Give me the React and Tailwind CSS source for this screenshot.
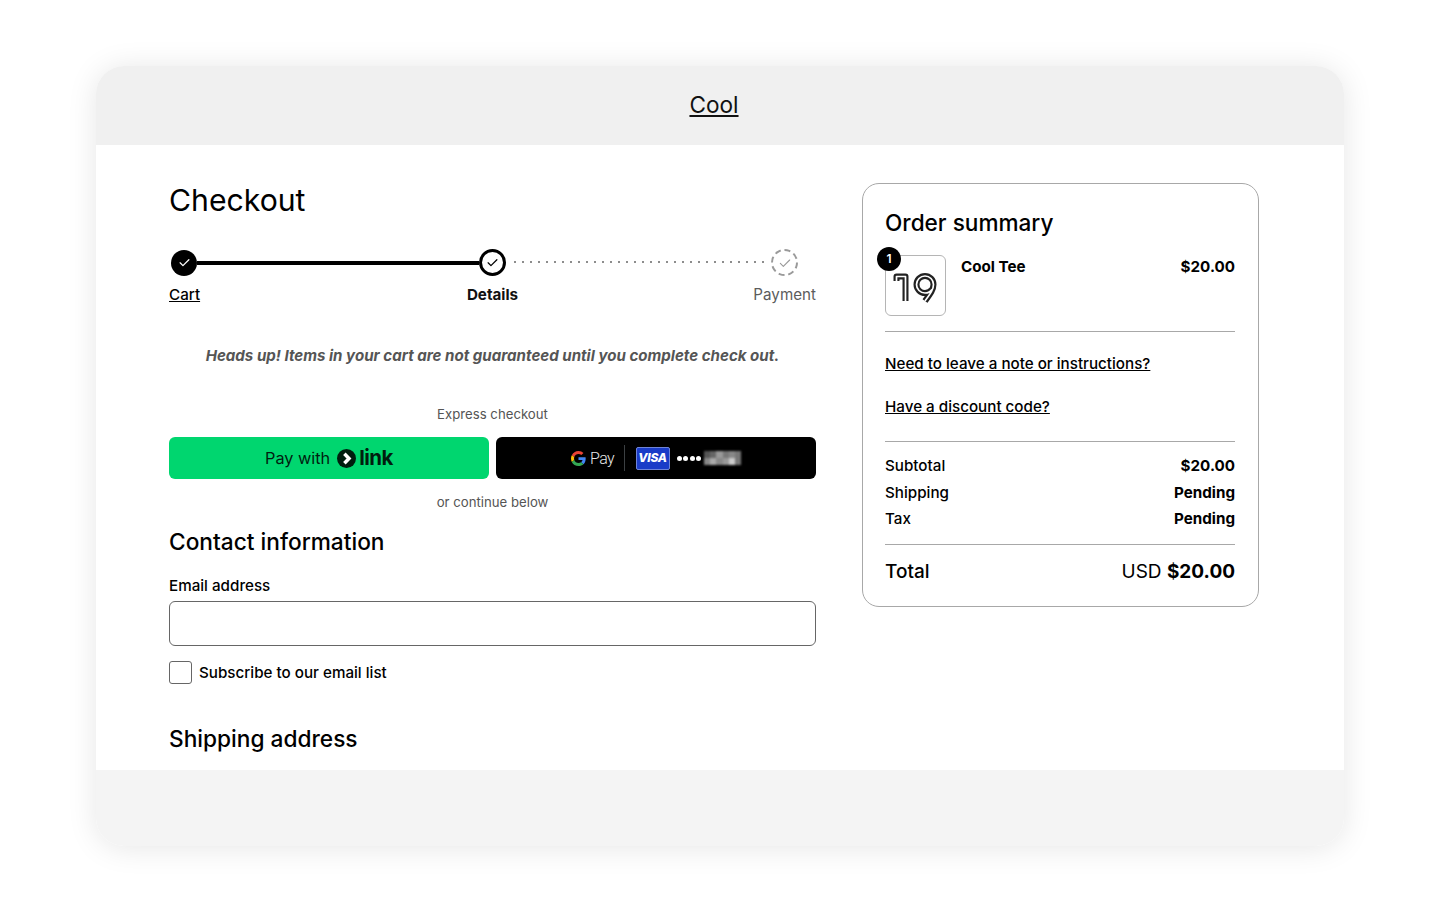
import React from 'react';

function Check({ className, thin }) {
  return (
    <svg viewBox="0 0 24 24" className={className} fill="none" stroke="currentColor" strokeWidth={thin ? 1.600 : 2} strokeLinecap="round" strokeLinejoin="round">
      <path d="M5 12.500l4.500 4.500L19 7.500" />
    </svg>
  );
}

function Stepper() {
  return (
    <div>
      <div className="flex items-center pl-[2px] pr-[18px]">
        <div className="w-[26px] h-[26px] rounded-full bg-black text-white flex items-center justify-center shrink-0">
          <Check className="w-[15px] h-[15px]" />
        </div>
        <div className="w-[282px] h-[4px] bg-black shrink-0" />
        <div className="w-[27px] h-[27px] rounded-full border-[3px] border-black text-black flex items-center justify-center shrink-0">
          <Check className="w-[15px] h-[15px]" />
        </div>
        <svg className="flex-1 h-[4px] -mt-[2px]" height="4">
          <line x1="8" y1="2" x2="261" y2="2" stroke="#8d8d8d" strokeWidth="2" strokeDasharray="2 6" />
        </svg>
        <div className="w-[27px] h-[27px] rounded-full border-2 border-dashed border-[#9a9a9a] text-[#999] flex items-center justify-center shrink-0">
          <Check className="w-[16px] h-[16px]" thin />
        </div>
      </div>
      <div className="grid grid-cols-3 mt-[9px] text-[15.200px] leading-[20px]">
        <a className="underline font-medium text-black justify-self-start">Cart</a>
        <span className="font-bold text-center text-[#111]">Details</span>
        <span className="text-right text-[#5c5c5c]">Payment</span>
      </div>
    </div>
  );
}

function GoogleG() {
  return (
    <svg viewBox="0 0 48 48" className="w-[15px] h-[15px]">
      <path fill="#EA4335" d="M24 9.500c3.500 0 6.600 1.200 9.100 3.600l6.800-6.800C35.800 2.500 30.400 0 24 0 14.600 0 6.500 5.400 2.600 13.200l7.900 6.100C12.400 13.600 17.700 9.500 24 9.500z" />
      <path fill="#4285F4" d="M46.900 24.500c0-1.600-.1-3.100-.4-4.500H24v9h12.900c-.6 3-2.200 5.500-4.700 7.200l7.700 6c4.500-4.200 7-10.300 7-17.700z" />
      <path fill="#FBBC05" d="M10.500 28.700c-.5-1.400-.8-3-.8-4.700s.3-3.200.8-4.700l-7.900-6.100C1 16.400 0 20.100 0 24s1 7.600 2.600 10.800l7.900-6.100z" />
      <path fill="#34A853" d="M24 48c6.500 0 11.900-2.100 15.900-5.800l-7.700-6c-2.100 1.400-4.900 2.300-8.200 2.300-6.300 0-11.600-4.100-13.500-9.800l-7.900 6.100C6.500 42.600 14.600 48 24 48z" />
    </svg>
  );
}

function ExpressButtons() {
  return (
    <div className="grid grid-cols-2 gap-[7px] mt-[13px]">
      <div className="h-[42px] rounded-[6px] bg-[#00d66f] flex items-center justify-center text-[#011e0f]">
        <span className="text-[16.300px]">Pay with</span>
        <span className="ml-[7px] w-[19px] h-[19px] rounded-full bg-[#011e0f] flex items-center justify-center">
          <svg viewBox="0 0 12 12" className="w-[15px] h-[15px]">
            <path d="M4.300 2.200L8 6 4.300 9.800" fill="none" stroke="#fff" strokeWidth="2.800" />
          </svg>
        </span>
        <span className="ml-[3px] text-[20.500px] font-bold tracking-[-0.5px] leading-none mt-[1px]">link</span>
      </div>
      <div className="h-[42px] rounded-[6px] bg-black flex items-center justify-center text-white">
        <GoogleG />
        <span className="ml-[4px] text-[16px] text-[#e8e8e8] tracking-[-0.6px] font-light mt-[1px]" style={{ fontFamily: 'Roboto, sans-serif' }}>Pay</span>
        <span className="ml-[9.500px] w-px h-[26px] bg-[#3c4043]" />
        <span className="ml-[11px] w-[34px] h-[23px] rounded-[2px] bg-[#1a3cc8] border border-[#6f84d8] flex items-center justify-center text-[12px] font-extrabold italic tracking-[-0.3px]">VISA</span>
        <span className="ml-[7px] flex gap-[1.500px]">
          <i className="w-[5px] h-[5px] rounded-full bg-white" />
          <i className="w-[5px] h-[5px] rounded-full bg-white" />
          <i className="w-[5px] h-[5px] rounded-full bg-white" />
          <i className="w-[5px] h-[5px] rounded-full bg-white" />
        </span>
        <span className="ml-[3px] w-[37px] h-[14px] blur-[1px] grid grid-cols-6">
          <i className="bg-[#555]" />
          <i className="bg-[#666]" />
          <i className="bg-[#999]" />
          <i className="bg-[#777]" />
          <i className="bg-[#888]" />
          <i className="bg-[#777]" />
          <i className="bg-[#888]" />
          <i className="bg-[#aaa]" />
          <i className="bg-[#888]" />
          <i className="bg-[#999]" />
          <i className="bg-[#ccc]" />
          <i className="bg-[#777]" />
        </span>
      </div>
    </div>
  );
}

function Thumb() {
  const one = 'M3.500 11V6.500h9V31';
  const nine = 'M40.500 14.500a8.500 8.500 0 1 0-8.500 8.500c3 0 5.500-1.200 7-3.500M40.500 14.500c0 5-3 9-8.500 16.500';
  return (
    <div className="relative w-[61px] h-[61px] rounded-[6px] border border-[#b5b5b5] flex items-center justify-center shrink-0">
      <svg viewBox="0 0 46 34" className="w-[46px] h-[34px] mt-[2px]" fill="none" strokeLinejoin="round">
        <g stroke="#222" strokeWidth="6">
          <path d={one} />
          <path d={nine} />
        </g>
        <g stroke="#fff" strokeWidth="1.700">
          <path d={one} />
          <path d={nine} />
        </g>
      </svg>
      <span className="absolute -left-[9px] -top-[9px] w-[24px] h-[24px] rounded-full bg-black text-white text-[12px] font-semibold flex items-center justify-center">1</span>
    </div>
  );
}

function OrderSummary() {
  return (
    <aside className="w-[397px] h-[424px] shrink-0 rounded-[17px] border border-[#a8a8a8] pl-[22px] pr-[23px] pt-[23px] text-black">
      <h2 className="text-[22.600px] leading-[32px] font-medium">Order summary</h2>
      <div className="flex mt-[16px] pb-[15px] border-b border-[#a8a8a8]">
        <Thumb />
        <div className="flex-1 flex justify-between ml-[15px] pt-[1px] text-[15.200px] font-bold leading-[22px]">
          <span>Cool Tee</span>
          <span>$20.00</span>
        </div>
      </div>
      <div className="pt-[21px] pb-[23px] border-b border-[#a8a8a8] text-[15.200px] font-medium leading-[22px]">
        <a className="block underline">Need to leave a note or instructions?</a>
        <a className="block underline mt-[21px]">Have a discount code?</a>
      </div>
      <div className="pt-[11px] pb-[11px] border-b border-[#a8a8a8] text-[15.200px] font-medium leading-[26.500px]">
        <div className="flex justify-between"><span>Subtotal</span><span className="font-bold">$20.00</span></div>
        <div className="flex justify-between"><span>Shipping</span><span className="font-bold">Pending</span></div>
        <div className="flex justify-between"><span>Tax</span><span className="font-bold">Pending</span></div>
      </div>
      <div className="flex justify-between items-baseline pt-[13px] text-[19px] leading-[28px]">
        <span className="font-medium">Total</span>
        <span>USD <b className="font-bold">$20.00</b></span>
      </div>
    </aside>
  );
}

export default function App() {
  return (
    <div className="min-h-[912px] bg-white px-[96px] pt-[66px]" style={{ fontFamily: 'Inter, sans-serif' }}>
      <div className="h-[780px] rounded-[28px] overflow-hidden bg-white shadow-[0_2px_30px_rgba(0,0,0,0.1)] flex flex-col">
        <header className="h-[79px] bg-[#f0f0f0] flex items-center justify-center shrink-0">
          <a className="underline text-[22.600px] text-[#111] ml-[-12px] -mt-[2px]">Cool</a>
        </header>
        <main className="flex-1 flex pl-[73px] pt-[37px] gap-[46px] overflow-hidden">
          <section className="w-[647px] shrink-0 text-black">
            <h1 className="text-[30.200px] leading-[36px]">Checkout</h1>
            <div className="mt-[31px]"><Stepper /></div>
            <p className="mt-[40px] text-center text-[15.100px] leading-[22px] font-bold italic text-[#555]">
              Heads up! Items in your cart are not guaranteed until you complete check out.
            </p>
            <p className="mt-[37px] text-center text-[13.200px] leading-[20px] text-[#555]">Express checkout</p>
            <ExpressButtons />
            <p className="mt-[13px] text-center text-[13.200px] leading-[20px] text-[#555]">or continue below</p>
            <h2 className="mt-[14px] text-[22.700px] leading-[32px] font-medium">Contact information</h2>
            <label className="block mt-[17px] text-[15.200px] leading-[22px] font-medium">Email address</label>
            <input className="block mt-[4px] w-full h-[45px] rounded-[6px] border border-[#666] bg-white" />
            <div className="flex items-center mt-[15px]">
              <span className="w-[23px] h-[23px] rounded-[3px] border border-[#666]" />
              <span className="ml-[7px] text-[15.200px] font-medium leading-[22px]">Subscribe to our email list</span>
            </div>
            <h2 className="mt-[39px] text-[22.700px] leading-[32px] font-medium">Shipping address</h2>
          </section>
          <div className="mt-[1px]"><OrderSummary /></div>
        </main>
        <footer className="h-[76px] bg-[#f4f4f4] shrink-0" />
      </div>
    </div>
  );
}
